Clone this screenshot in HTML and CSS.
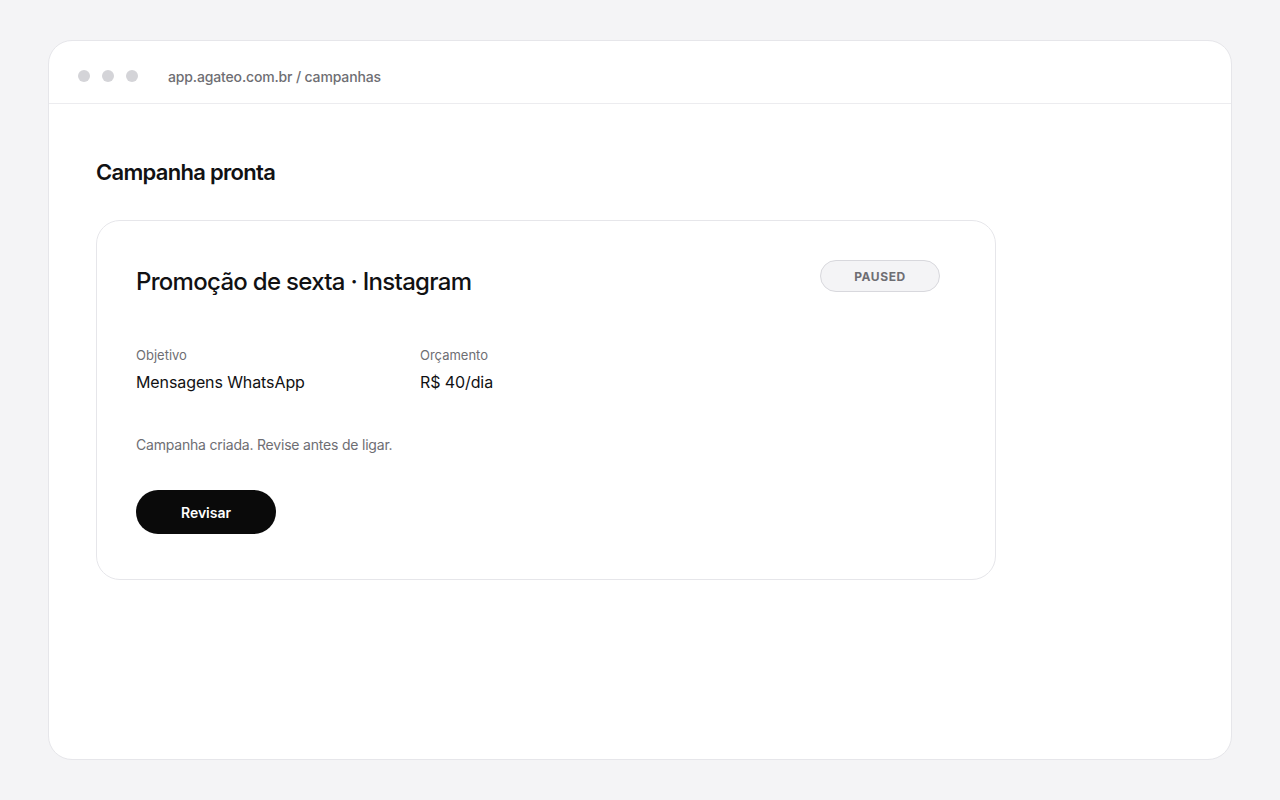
FILE: index.html
```html
<!DOCTYPE html>
<html lang="pt-BR">
<head>
    <meta charset="UTF-8">
    <title>Campanhas · Agateo</title>
    <link rel="stylesheet" href="styles.css">
</head>
<body>
    <div class="window">
        <div class="topbar">
            <div class="dots">
                <span class="dot"></span>
                <span class="dot"></span>
                <span class="dot"></span>
            </div>
            <div class="url">app.agateo.com.br / campanhas</div>
        </div>
        <div class="content">
            <h1 class="page-title">Campanha pronta</h1>
            <div class="card">
                <div class="card-head">
                    <h2 class="card-title">Promoção de sexta · Instagram</h2>
                    <span class="badge">PAUSED</span>
                </div>
                <div class="meta">
                    <div class="meta-item">
                        <div class="meta-label">Objetivo</div>
                        <div class="meta-value">Mensagens WhatsApp</div>
                    </div>
                    <div class="meta-item">
                        <div class="meta-label">Orçamento</div>
                        <div class="meta-value">R$ 40/dia</div>
                    </div>
                </div>
                <p class="note">Campanha criada. Revise antes de ligar.</p>
                <button class="button">Revisar</button>
            </div>
        </div>
    </div>
</body>
</html>
```

FILE: styles.css
```css
* {
    box-sizing: border-box;
}
body {
    margin: 0;
    padding: 40px 48px;
    background: #f4f4f6;
    font-family: Inter, "Noto Sans", sans-serif;
    color: #111113;
}
.window {
    height: 720px;
    background: #fff;
    border: 1px solid #e6e6ea;
    border-radius: 24px;
    overflow: hidden;
}
.topbar {
    display: flex;
    align-items: center;
    height: 63px;
    padding: 8px 29px 0;
    border-bottom: 1px solid #ececef;
}
.dots {
    display: flex;
    gap: 12px;
}
.dot {
    width: 12px;
    height: 12px;
    border-radius: 50%;
    background: #d4d4d8;
}
.url {
    margin-left: 30px;
    font-size: 14px;
    font-weight: 500;
    letter-spacing: -0.15px;
    color: #6e6e73;
}
.content {
    padding: 54px 47px;
}
.page-title {
    margin: 0 0 34px;
    font-size: 22px;
    line-height: 28px;
    font-weight: 600;
    letter-spacing: -0.7px;
}
.card {
    width: 900px;
    height: 360px;
    border: 1px solid #e6e6ea;
    border-radius: 24px;
    padding: 39px 55px 39px 39px;
}
.card-head {
    display: flex;
    justify-content: space-between;
    align-items: flex-start;
}
.card-title {
    margin: 5px 0 0;
    font-size: 24px;
    line-height: 34px;
    font-weight: 500;
    letter-spacing: -0.7px;
}
.badge {
    width: 120px;
    height: 32px;
    display: flex;
    align-items: center;
    justify-content: center;
    border: 1px solid #d8d8dd;
    border-radius: 16px;
    background: #f4f4f6;
    font-size: 12px;
    font-weight: 700;
    letter-spacing: 0.6px;
    color: #6e6e73;
}
.meta {
    display: grid;
    grid-template-columns: 284px 284px;
    margin-top: 47px;
}
.meta-label {
    font-size: 13px;
    line-height: 18px;
    color: #6e6e73;
}
.meta-value {
    margin-top: 7px;
    font-size: 16px;
    line-height: 22px;
    font-weight: 400;
    letter-spacing: -0.1px;
}
.note {
    margin: 42px 0 0;
    font-size: 14px;
    line-height: 20px;
    letter-spacing: -0.2px;
    color: #6e6e73;
}
.button {
    display: block;
    margin-top: 35px;
    width: 140px;
    height: 44px;
    border: none;
    border-radius: 22px;
    background: #0a0a0a;
    color: #fff;
    font-family: inherit;
    font-size: 14px;
    font-weight: 600;
    cursor: pointer;
}
```
